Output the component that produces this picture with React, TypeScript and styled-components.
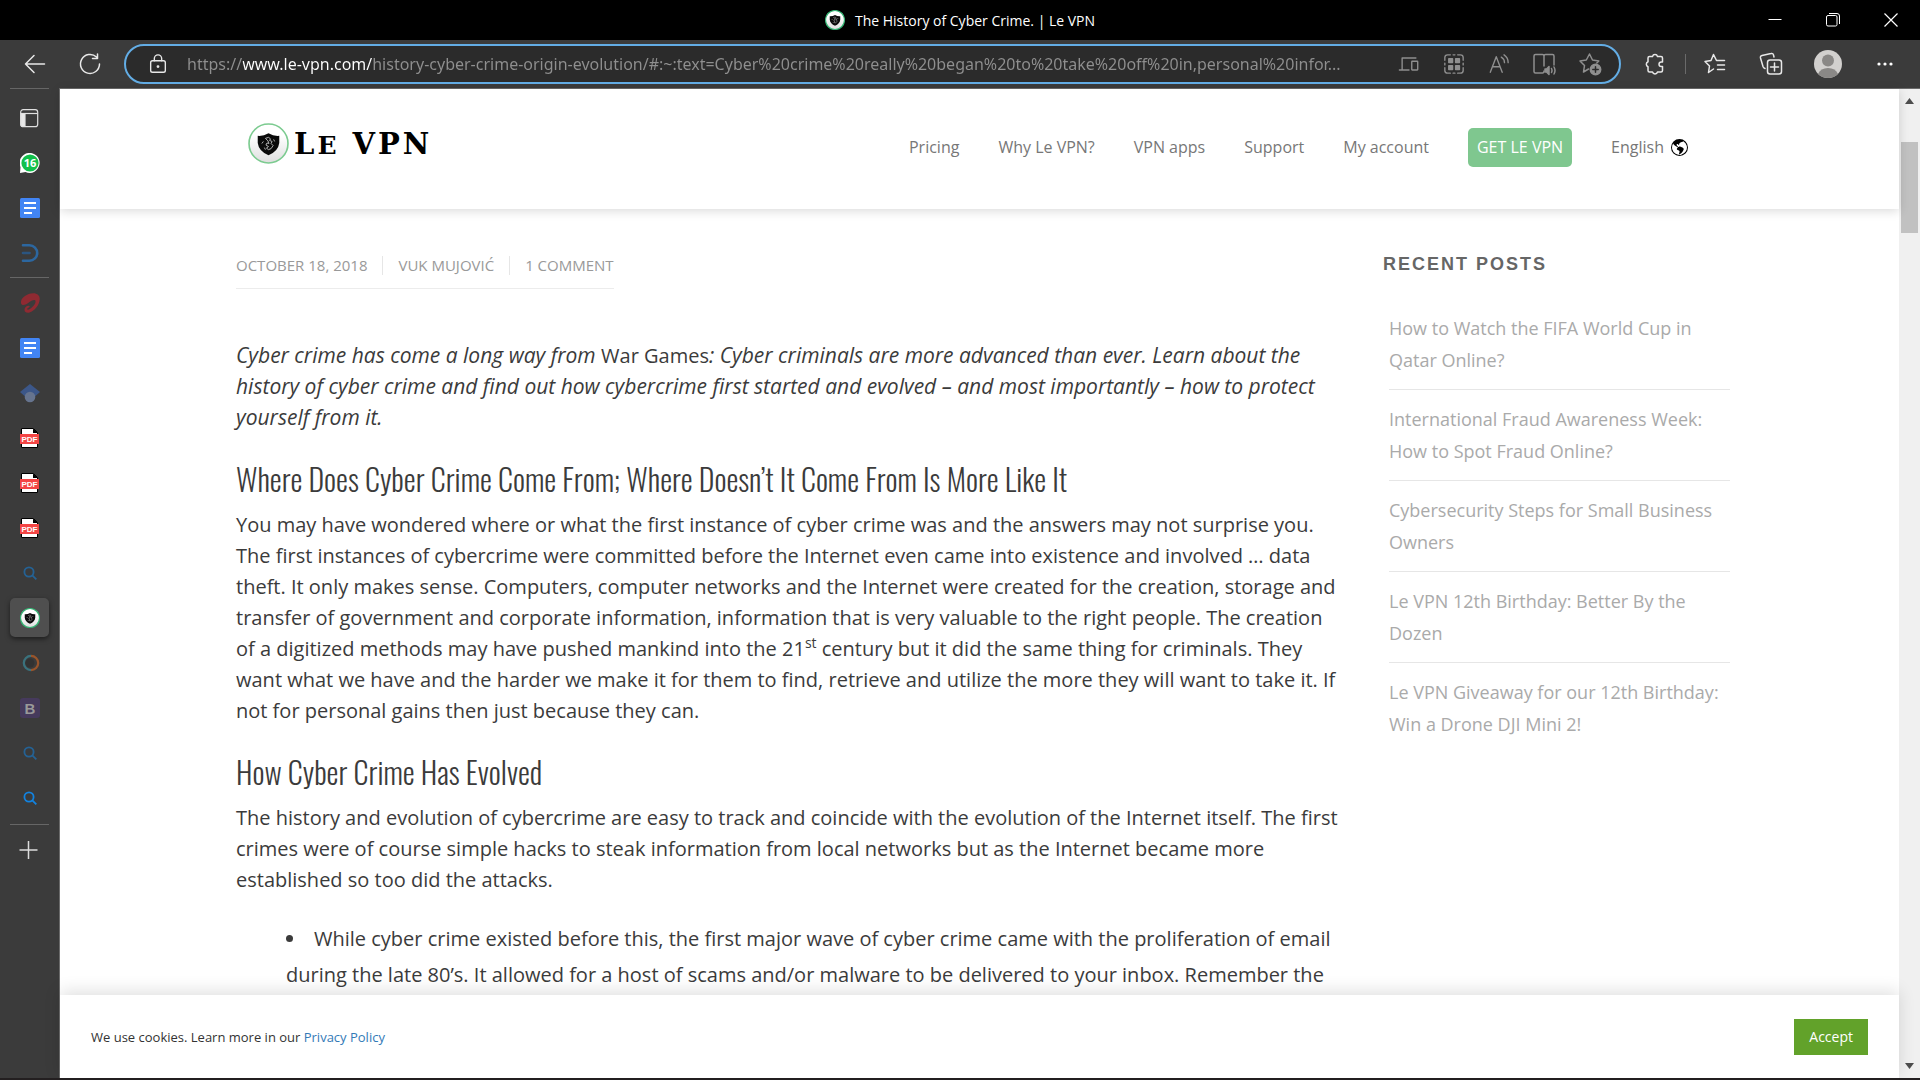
import React from 'react';
import styled, { createGlobalStyle, css } from 'styled-components';
import { BsGlobeAmericas } from 'react-icons/bs';

const ui = '"Open Sans", "Noto Sans", sans-serif';
const line = '#ececec';

const GlobalStyle = createGlobalStyle`
  *, *::before, *::after { box-sizing: border-box; }
  body { margin: 0; background: #231f20; font-family: ${ui}; color: #3b3b3b; }
  button { border: 0; padding: 0; background: none; font: inherit; color: inherit; cursor: pointer; }
  a { color: inherit; text-decoration: none; }
  svg { display: block; flex: none; }
  h2, h3, p, ul { margin: 0; padding: 0; }
`;

const Window = styled.div`
  height: 100vh;
  display: flex;
  flex-direction: column;
  overflow: hidden;
  border-bottom: 2px solid #231f20;
  background: #3b3b3b;
`;

const TitleBar = styled.div`
  height: 40px;
  flex: none;
  display: grid;
  grid-template-columns: 1fr auto 1fr;
  align-items: center;
  background: #000;
  color: #fff;
  font-size: 14px;
`;

const PageTitle = styled.div`
  display: flex;
  align-items: center;
  gap: 10px;
`;

const WindowControls = styled.div`
  display: flex;
  justify-content: flex-end;
`;

const WindowButton = styled.button`
  width: 58px;
  height: 40px;
  display: grid;
  place-items: center;
`;

const Toolbar = styled.div`
  height: 48px;
  flex: none;
  display: flex;
  align-items: center;
  color: #e8e8e8;
`;

const IconButton = styled.button<{ $w?: number }>`
  width: ${p => p.$w ?? 56}px;
  height: 40px;
  flex: none;
  display: grid;
  place-items: center;
`;

const NavButtons = styled.div`
  display: flex;
  padding: 0 7px;
`;

const AddressBar = styled.form`
  flex: 1;
  min-width: 0;
  height: 40px;
  display: flex;
  align-items: center;
  padding: 0 7px 0 12px;
  border: 2px solid #63ade5;
  border-radius: 20px;
  background: #2b2b2b;
  color: #8f8f8f;
`;

const UrlInput = styled.input`
  flex: 1;
  min-width: 0;
  height: 32px;
  padding: 0;
  margin-left: 9px;
  border: 0;
  outline: 0;
  font: 16px "Noto Sans", "Open Sans", sans-serif;
  color: transparent;
  background: linear-gradient(90deg, #8f8f8f 56px, #fff 56px, #fff 185px, #8f8f8f 185px);
  -webkit-background-clip: text;
  background-clip: text;
`;

const Tools = styled.div`
  display: flex;
  align-items: center;
  padding: 0 7px;
`;

const ToolDivider = styled.span`
  width: 1px;
  height: 20px;
  margin: 0 1px 0 3px;
  background: #6a6a6a;
`;

const Body = styled.div`
  flex: 1;
  min-height: 0;
  display: flex;
`;

const TabRail = styled.nav`
  width: 59px;
  flex: none;
  display: flex;
  flex-direction: column;
  align-items: flex-start;
  padding-left: 10px;
`;

const RailRule = styled.span<{ $place?: 'first' | 'last' }>`
  width: 39px;
  height: 1px;
  flex: none;
  margin: ${p => (p.$place === 'first' ? '0 0 6px' : p.$place === 'last' ? '4px 0 2px' : '2px 0')};
  background: #666;
`;

const RailButton = styled.button<{ $active?: boolean; $dim?: boolean }>`
  width: 39px;
  height: 39px;
  margin: 3px 0;
  flex: none;
  display: grid;
  place-items: center;
  border-radius: 5px;
  ${p => p.$active && css`
    background: #4f4f4f;
    box-shadow: 0 2px 5px rgba(0, 0, 0, 0.5);
  `}
  svg { opacity: ${p => (p.$dim ? 0.55 : 1)}; }
`;

const Frame = styled.div`
  flex: 1;
  min-width: 0;
  display: flex;
  border-top: 1px solid #6b6b6b;
  border-left: 1px solid #6b6b6b;
  background: #fff;
`;

const Page = styled.div`
  flex: 1;
  min-width: 0;
  display: flex;
  flex-direction: column;
`;

const Container = styled.div`
  width: 100%;
  max-width: 1503px;
  margin: 0 auto;
  padding: 0 1px 0 8px;
`;

const SiteHeader = styled.header`
  position: relative;
  flex: none;
  background: #fff;
  box-shadow: 0 2px 10px rgba(0, 0, 0, 0.15);
`;

const HeaderRow = styled(Container)`
  height: 120px;
  display: flex;
  align-items: center;
  justify-content: space-between;
  padding: 0 43px 4px 20px;
`;

const Logo = styled.a`
  display: flex;
  align-items: center;
  gap: 5px;
  margin-bottom: 8px;
  color: #000;
  font: bold 29px/40px "DejaVu Serif", "Liberation Serif", serif;
`;

const Wordmark = styled.span`
  padding-top: 4px;
  letter-spacing: 3px;
`;

const SmallCap = styled.span`
  font-size: 25px;
`;

const SiteNav = styled.nav`
  display: flex;
  align-items: center;
  gap: 39px;
  font-size: 16px;
  color: #777;
`;

const CallToAction = styled.a`
  padding: 0 9px;
  border-radius: 5px;
  background: #7fc78f;
  color: #fff;
  line-height: 39px;
`;

const Language = styled.a`
  display: flex;
  align-items: center;
  gap: 7px;
  svg { color: #000; }
`;

const Main = styled.main`
  flex: 1;
  min-height: 0;
  overflow: hidden;
`;

const Columns = styled(Container)`
  display: grid;
  grid-template-columns: minmax(0, 1fr) 347px;
  gap: 44px;
`;

const Article = styled.article`
  padding-top: 47px;
  font-size: 20px;
  line-height: 31px;
`;

const Meta = styled.div`
  width: fit-content;
  display: flex;
  align-items: center;
  margin-bottom: 51px;
  padding-bottom: 13px;
  border-bottom: 1px solid ${line};
  font-size: 15px;
  line-height: 19px;
  text-transform: uppercase;
  color: #999;
`;

const MetaItem = styled.span`
  & + & {
    margin-left: 15px;
    padding-left: 15px;
    border-left: 1px solid #e6e6e6;
  }
`;

const Intro = styled.p`
  font-size: 21px;
  font-style: italic;
`;

const Upright = styled.span`
  font-size: 20px;
  font-style: normal;
`;

const Heading = styled.h2`
  margin: 26px 0 10px;
  font: 300 30px/40px Oswald, "Roboto Condensed", "Liberation Sans Narrow", "Open Sans", sans-serif;
`;

const Sup = styled.sup`
  font-size: 14px;
  line-height: 0;
`;

const Bullets = styled.ul`
  margin-top: 26px;
  padding-left: 50px;
  list-style: disc inside;
  line-height: 36px;
`;

const Aside = styled.aside`
  padding-top: 44px;
`;

const AsideTitle = styled.h3`
  margin-bottom: 24px;
  font: bold 18px/22px "Liberation Sans", Arial, sans-serif;
  letter-spacing: 2px;
  color: #666;
`;

const PostList = styled.ul`
  padding-left: 6px;
  list-style: none;
  font-size: 18px;
  line-height: 32px;
  color: #aaa;
`;

const Post = styled.li`
  padding: 13px 0;
  & + & { border-top: 1px solid #e6e6e6; }
`;

const CookieBar = styled.section`
  position: relative;
  flex: none;
  height: 83px;
  display: flex;
  align-items: center;
  justify-content: space-between;
  padding: 0 31px;
  background: #fff;
  box-shadow: 0 -4px 16px rgba(0, 0, 0, 0.12);
  font-size: 13px;
  color: #333;
  a { color: #337ab7; }
`;

const AcceptButton = styled.button`
  padding: 0 15px;
  background: #62a22a;
  color: #fff;
  font-size: 14px;
  line-height: 36px;
`;

const ScrollTrack = styled.div`
  width: 21px;
  flex: none;
  display: flex;
  flex-direction: column;
  align-items: center;
  background: #f0f0f0;
  color: #4d4d4d;
`;

const ScrollArrow = styled.button`
  width: 21px;
  height: 24px;
  display: grid;
  place-items: center;
`;

const ScrollThumb = styled.div`
  width: 17px;
  height: 91px;
  margin: 29px 0 auto;
  background: #c1c1c1;
`;

const Ico = ({ size = 24, sw = 1.5, children }: { size?: number; sw?: number; children: React.ReactNode }) => (
  <svg width={size} height={size} viewBox="0 0 24 24" fill="none" stroke="currentColor" strokeWidth={sw} strokeLinecap="round" strokeLinejoin="round" aria-hidden="true">
    {children}
  </svg>
);

const Shield = ({ size }: { size: number }) => (
  <svg width={size} height={size} viewBox="0 0 40 40" aria-hidden="true">
    <defs>
      <linearGradient id="disc" x1="0" y1="0" x2="0" y2="1">
        <stop offset="0.3" stopColor="#fff" />
        <stop offset="1" stopColor="#dedede" />
      </linearGradient>
    </defs>
    <circle cx="20" cy="20" r="19" fill="url(#disc)" stroke={size > 24 ? '#7ccb90' : '#35b574'} strokeWidth={size > 24 ? 1.6 : 2.4} />
    <path d="M9.500 12.500q5.500 0.500 10.500 -2.500q5 3 10.500 2.500v7q-1 8 -10.500 12q-9.500 -4 -10.500 -12z" fill="#0a0a0a" />
    <path d="M17 15l3-1 2 1.500-1 1.500 2.500 1-1 2 2 2-2 3-2.500 1-2-1.500 2-1.500-2.500-1.500 1-2 2 .5-1-2.500zM15 18l-1.500 2M25 16l1 2M16 24l1 2" fill="none" stroke="#bbb" strokeWidth="0.900" />
  </svg>
);

const DocsIcon = () => (
  <svg width="20" height="20" viewBox="0 0 20 20" aria-hidden="true">
    <rect width="20" height="20" rx="1.500" fill="#4285f4" />
    <path d="M4 5h12M4 10h12M4 15h8" stroke="#fff" strokeWidth="2.200" />
  </svg>
);

const PdfIcon = () => (
  <svg width="20" height="20" viewBox="0 0 20 20" aria-hidden="true">
    <path d="M1.500 0.500h12l4 4v15h-16z" fill="#fff" stroke="#000" />
    <path d="M13 0.500v4.500h5z" fill="#000" />
    <rect y="6" width="19" height="10" fill="#f44545" />
    <text x="9.500" y="13.800" textAnchor="middle" fontFamily="Liberation Sans, sans-serif" fontWeight="bold" fontSize="8" fill="#fff">PDF</text>
  </svg>
);

const SearchIcon = () => (
  <svg width="20" height="20" viewBox="0 0 20 20" fill="none" stroke="#1283e0" strokeWidth="1.800" aria-hidden="true">
    <circle cx="9" cy="9" r="4.600" />
    <path d="M12.300 12.300l4 4" />
  </svg>
);

const WhatsAppIcon = () => (
  <svg width="20" height="20" viewBox="0 0 20 20" aria-hidden="true">
    <path d="M0 20l.5-6A10 10 0 1 1 5.500 19z" fill="#fff" />
    <circle cx="10" cy="10" r="8.600" fill="#12c04b" />
    <text x="10" y="14" textAnchor="middle" fontFamily="Open Sans, sans-serif" fontWeight="bold" fontSize="11" fill="#fff">16</text>
  </svg>
);

const posts = [
  'How to Watch the FIFA World Cup in Qatar Online?',
  'International Fraud Awareness Week: How to Spot Fraud Online?',
  'Cybersecurity Steps for Small Business Owners',
  'Le VPN 12th Birthday: Better By the Dozen',
  'Le VPN Giveaway for our 12th Birthday: Win a Drone DJI Mini 2!',
];

const navLinks = ['Pricing', 'Why Le VPN?', 'VPN apps', 'Support', 'My account'];

const url = 'https://www.le-vpn.com/history-cyber-crime-origin-evolution/#:~:text=Cyber%20crime%20really%20began%20to%20take%20off%20in,personal%20infor...';

const Rail = () => (
  <TabRail aria-label="Tabs">
    <RailRule $place="first" />
    <RailButton aria-label="Tab actions">
      <svg width="20" height="20" viewBox="0 0 20 20" fill="none" stroke="#e0e0e0" strokeWidth="1.200" aria-hidden="true">
        <rect x="0.700" y="1.700" width="17" height="17" rx="2.500" />
        <path d="M1 5.500h16.500" />
        <path d="M1 5.500h4v13H2.500q-1.500 0-1.500-1.500z" fill="#e8e8e8" />
      </svg>
    </RailButton>
    <RailButton aria-label="WhatsApp"><WhatsAppIcon /></RailButton>
    <RailButton aria-label="Document"><DocsIcon /></RailButton>
    <RailButton aria-label="Dashboard">
      <svg width="20" height="20" viewBox="0 0 20 20" fill="none" stroke="#2c67a0" strokeWidth="2.600" strokeLinecap="round" aria-hidden="true">
        <path d="M3 2.300h6.500a7.700 7.700 0 0 1 0 15.400H3" />
        <path d="M3 10h6.500" stroke="#2b5580" />
      </svg>
    </RailButton>
    <RailRule />
    <RailButton aria-label="Airtel">
      <svg width="20" height="20" viewBox="0 0 20 20" aria-hidden="true">
        <path d="M1 8.500C1.500 4.500 7 .5 13 .3c4.500-.1 7 2.500 6.700 6.200-.4 5.500-5.200 11.500-10.200 13-2.500.8-5-.2-5-2.500 0-2.500 2-4.500 4.500-4.200.8.1.8 1 .2 1.400-1 .6-2 1-2 1.900 0 .8 1.200.7 2.200.1C13 14 15.800 10.500 15.500 8c-.3-2-3.500-1-6 1-2.500 1.900-5 3.400-7 3C1.200 11.600.8 10.200 1 8.500z" fill="#8f2a32" />
      </svg>
    </RailButton>
    <RailButton aria-label="Document"><DocsIcon /></RailButton>
    <RailButton aria-label="Scholar">
      <svg width="20" height="20" viewBox="0 0 20 20" aria-hidden="true">
        <path d="M10 1L20 9l-4.500 4H4.500L0 9z" fill="#3c5789" />
        <circle cx="10" cy="14" r="5.300" fill="#66748f" />
      </svg>
    </RailButton>
    <RailButton aria-label="PDF file"><PdfIcon /></RailButton>
    <RailButton aria-label="PDF file"><PdfIcon /></RailButton>
    <RailButton aria-label="PDF file"><PdfIcon /></RailButton>
    <RailButton $dim aria-label="Search"><SearchIcon /></RailButton>
    <RailButton $active aria-label="Le VPN"><Shield size={20} /></RailButton>
    <RailButton $dim aria-label="Player">
      <svg width="20" height="20" viewBox="0 0 20 20" fill="none" strokeWidth="2.200" aria-hidden="true">
        <circle cx="10" cy="10" r="4.500" fill="#2b2b2b" />
        <path d="M11 2.800a7.200 7.200 0 1 0 0 14.400" stroke="#3aa0b4" />
        <path d="M11 2.800a7.200 7.200 0 0 1 0 14.400" stroke="#e56a1e" />
      </svg>
    </RailButton>
    <RailButton aria-label="Bootstrap">
      <svg width="20" height="20" viewBox="0 0 20 20" aria-hidden="true">
        <rect width="20" height="20" rx="3" fill="#463a5c" />
        <text x="10" y="15.500" textAnchor="middle" fontFamily="Liberation Sans, sans-serif" fontWeight="bold" fontSize="15" fill="#999">B</text>
      </svg>
    </RailButton>
    <RailButton $dim aria-label="Search"><SearchIcon /></RailButton>
    <RailButton aria-label="Search"><SearchIcon /></RailButton>
    <RailRule $place="last" />
    <RailButton aria-label="New tab">
      <svg width="22" height="20" viewBox="0 0 22 20" stroke="#ddd" strokeWidth="1.500" aria-hidden="true"><path d="M0.500 10h18M9.500 1v18" /></svg>
    </RailButton>
  </TabRail>
);

export default function App() {
  return (
    <>
      <GlobalStyle />
      <Window>
        <TitleBar>
          <span />
          <PageTitle><Shield size={20} />The History of Cyber Crime. | Le VPN</PageTitle>
          <WindowControls>
            <WindowButton aria-label="Minimize"><svg width="14" height="14" viewBox="0 0 14 14" stroke="#fff"><path d="M0.500 6.500h13" /></svg></WindowButton>
            <WindowButton aria-label="Restore"><svg width="14" height="14" viewBox="0 0 14 14" stroke="#fff" fill="none"><rect x="0.500" y="2.500" width="10.500" height="10.500" rx="1.500" /><path d="M3 0.500h8q2.500 0 2.500 2.500v8" /></svg></WindowButton>
            <WindowButton aria-label="Close"><svg width="14" height="14" viewBox="0 0 14 14" stroke="#fff" strokeWidth="1.200"><path d="M0.500 0.500l13 13M13.500 0.500l-13 13" /></svg></WindowButton>
          </WindowControls>
        </TitleBar>

        <Toolbar>
          <NavButtons>
            <IconButton aria-label="Back"><Ico><path d="M21.500 12H2.500M11 3.500L2.500 12l8.500 8.500" /></Ico></IconButton>
            <IconButton $w={54} aria-label="Refresh"><Ico><path d="M21.500 12a9.500 9.500 0 1 1-3-7M19.500 2v4.500h-5" /></Ico></IconButton>
          </NavButtons>
          <AddressBar onSubmit={e => e.preventDefault()}>
            <IconButton type="button" $w={40} aria-label="Site information">
              <Ico size={22}><g stroke="#e8e8e8"><rect x="4" y="8.500" width="16" height="12.500" rx="2" /><path d="M8 8.500V6a4 4 0 0 1 8 0v2.500" /><circle cx="12" cy="14.800" r="0.800" fill="#e8e8e8" /></g></Ico>
            </IconButton>
            <UrlInput aria-label="Address" defaultValue={url} />
            <IconButton type="button" $w={45} aria-label="Send to devices">
              <Ico size={22}><path d="M12 18.500H1.500M4.500 18.500V5.500h15" /><rect x="15" y="9" width="6.500" height="9.500" rx="0.500" /></Ico>
            </IconButton>
            <IconButton type="button" $w={45} aria-label="Apps">
              <Ico size={22}><path d="M2 8V5a3 3 0 0 1 3-3h3M16 2h3a3 3 0 0 1 3 3v3M22 16v3a3 3 0 0 1-3 3h-3M8 22H5a3 3 0 0 1-3-3v-3M11 2h2M11 22h2M2 11v2M22 11v2" /><g fill="currentColor" stroke="none"><rect x="5.500" y="5.500" width="5.700" height="5.700" rx="0.800" /><rect x="13" y="5.500" width="5.700" height="5.700" rx="0.800" /><rect x="5.500" y="13" width="5.700" height="5.700" rx="0.800" /><rect x="13" y="13" width="5.700" height="5.700" rx="0.800" /></g></Ico>
            </IconButton>
            <IconButton type="button" $w={45} aria-label="Read aloud">
              <Ico size={22}><path d="M2.500 21L9 4l6.500 17M5 15h8M14.500 4.500q3.500 2 3.500 6M17.500 2q4.500 3 4.500 8.500" /></Ico>
            </IconButton>
            <IconButton type="button" $w={46} aria-label="Immersive reader">
              <Ico size={24}><path d="M10.500 21H3.500q-1.500 0-1.500-1.500V4q0-1.500 1.500-1.500h7q1.500 0 1.500 1.500v10M12 4q0-1.500 1.500-1.500h7q1.500 0 1.500 1.500v9M10.500 21q1.500 0 1.500-2" /><path d="M13 17h1.500l2.500-2.500v8L14.500 20H13z" fill="currentColor" /><path d="M19.500 16.500q1 2 0 4M22 15q2 3.500 0 7" /></Ico>
            </IconButton>
            <IconButton type="button" $w={45} aria-label="Add to favorites">
              <Ico size={24}><path d="M10.500 17l-5 3 1-6.500-4.500-4.500 6.300-1L11.500 2l3 6 6.300 1-2 2" /><circle cx="17.500" cy="17.500" r="5.200" fill="currentColor" /><path d="M17.500 14.800v5.400M14.800 17.500h5.400" stroke="#2b2b2b" /></Ico>
            </IconButton>
          </AddressBar>
          <Tools>
            <IconButton $w={54} aria-label="Extensions">
              <Ico size={24}><path d="M6.500 4.500h3a2.600 2.600 0 0 1 5 0h3.500q1.500 0 1.500 1.500v4h-1.200a2.300 2.300 0 0 0 0 4.600h1.200v3.900q0 1.500-1.500 1.500h-3.500a2.600 2.600 0 0 1-5 0h-3q-1.500 0-1.500-1.500v-3.700a2.700 2.700 0 0 1 0-5V6q0-1.500 1.500-1.500z" /></Ico>
            </IconButton>
            <ToolDivider />
            <IconButton $w={56} aria-label="Favorites">
              <Ico size={24}><path d="M10.500 17L5.500 20.500l1-6.500L2 9.500l6-1L10.500 2.500l3 6h8M14.500 13h7M14.500 17.500h7" /></Ico>
            </IconButton>
            <IconButton $w={56} aria-label="Collections">
              <Ico size={24}><rect x="8.500" y="8" width="14" height="14" rx="2.500" /><path d="M15.500 11v8M11.500 15h8M6 16.500Q4.500 16 4 14.500L1.500 6Q1 4 3 3.500L12 1.500q2-.5 2.500 1.500l.5 2" /></Ico>
            </IconButton>
            <IconButton $w={58} aria-label="Profile">
              <svg width="28" height="28" viewBox="0 0 28 28" aria-hidden="true"><circle cx="14" cy="14" r="14" fill="#d2d0ce" /><circle cx="14" cy="10.500" r="6" fill="#8a8886" /><path d="M4 24q2.500-6 10-6t10 6q-4 4-10 4T4 24z" fill="#8a8886" /></svg>
            </IconButton>
            <IconButton $w={56} aria-label="Settings and more">
              <svg width="18" height="18" viewBox="0 0 18 18" fill="#fff" aria-hidden="true"><circle cx="3" cy="9" r="1.600" /><circle cx="9" cy="9" r="1.600" /><circle cx="15" cy="9" r="1.600" /></svg>
            </IconButton>
          </Tools>
        </Toolbar>

        <Body>
          <Rail />
          <Frame>
            <Page>
              <SiteHeader>
                <HeaderRow>
                  <Logo href="#"><Shield size={41} /><Wordmark>L<SmallCap>E</SmallCap> VPN</Wordmark></Logo>
                  <SiteNav>
                    {navLinks.map(l => <a href="#" key={l}>{l}</a>)}
                    <CallToAction href="#">GET LE VPN</CallToAction>
                    <Language href="#">English<BsGlobeAmericas size={17} /></Language>
                  </SiteNav>
                </HeaderRow>
              </SiteHeader>
              <Main>
                <Columns>
                  <Article>
                    <Meta>
                      <MetaItem>October 18, 2018</MetaItem>
                      <MetaItem><a href="#">Vuk Mujović</a></MetaItem>
                      <MetaItem><a href="#">1 Comment</a></MetaItem>
                    </Meta>
                    <Intro>
                      Cyber crime has come a long way from <Upright>War Games</Upright>: Cyber criminals are more advanced than ever. Learn about the history of cyber crime and find out how cybercrime first started and evolved – and most importantly – how to protect yourself from it.
                    </Intro>
                    <Heading>Where Does Cyber Crime Come From; Where Doesn’t It Come From Is More Like It</Heading>
                    <p>
                      You may have wondered where or what the first instance of cyber crime was and the answers may not surprise you. The first instances of cybercrime were committed before the Internet even came into existence and involved … data theft. It only makes sense. Computers, computer networks and the Internet were created for the creation, storage and transfer of government and corporate information, information that is very valuable to the right people. The creation of a digitized methods may have pushed mankind into the 21<Sup>st</Sup> century but it did the same thing for criminals. They want what we have and the harder we make it for them to find, retrieve and utilize the more they will want to take it. If not for personal gains then just because they can.
                    </p>
                    <Heading>How Cyber Crime Has Evolved</Heading>
                    <p>
                      The history and evolution of cybercrime are easy to track and coincide with the evolution of the Internet itself. The first crimes were of course simple hacks to steak information from local networks but as the Internet became more established so too did the attacks.
                    </p>
                    <Bullets>
                      <li>While cyber crime existed before this, the first major wave of cyber crime came with the proliferation of email during the late 80’s. It allowed for a host of scams and/or malware to be delivered to your inbox. Remember the</li>
                    </Bullets>
                  </Article>
                  <Aside>
                    <AsideTitle>RECENT POSTS</AsideTitle>
                    <PostList>
                      {posts.map(p => <Post key={p}><a href="#">{p}</a></Post>)}
                    </PostList>
                  </Aside>
                </Columns>
              </Main>
              <CookieBar aria-label="Cookie notice">
                <p>We use cookies. Learn more in our <a href="#">Privacy Policy</a></p>
                <AcceptButton>Accept</AcceptButton>
              </CookieBar>
            </Page>
            <ScrollTrack>
              <ScrollArrow aria-label="Scroll up"><svg width="9" height="6" viewBox="0 0 9 6" fill="currentColor"><path d="M0 6l4.500-6L9 6z" /></svg></ScrollArrow>
              <ScrollThumb />
              <ScrollArrow aria-label="Scroll down"><svg width="9" height="6" viewBox="0 0 9 6" fill="currentColor"><path d="M0 0l4.500 6L9 0z" /></svg></ScrollArrow>
            </ScrollTrack>
          </Frame>
        </Body>
      </Window>
    </>
  );
}
